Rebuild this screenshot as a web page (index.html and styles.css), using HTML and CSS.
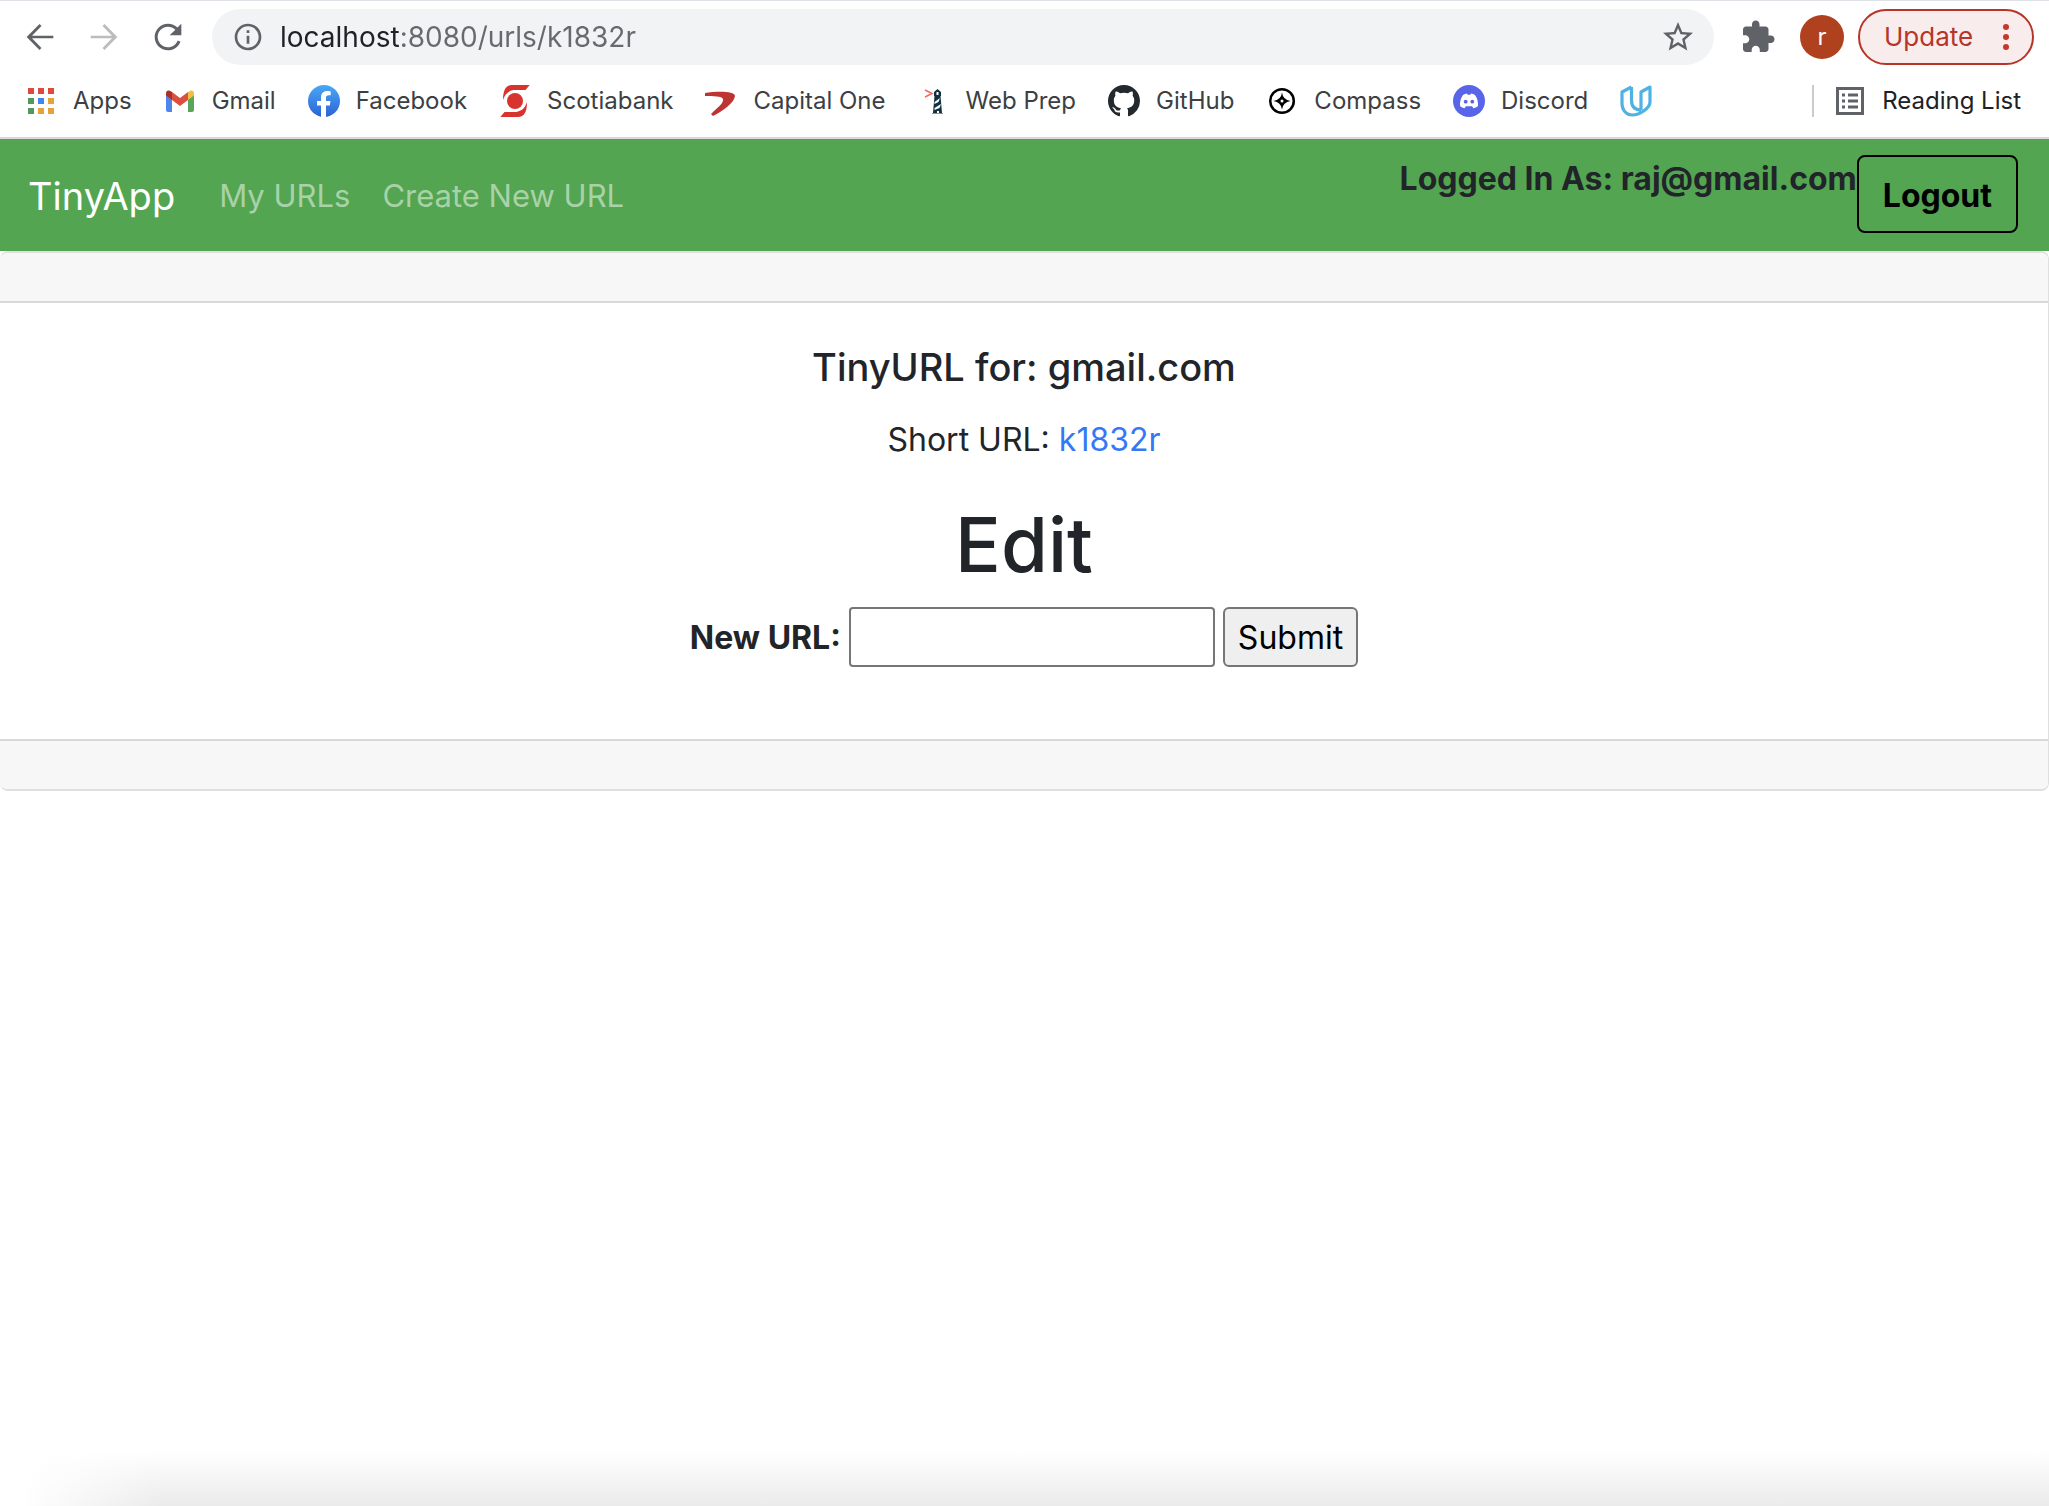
FILE: index.html
```html
<!DOCTYPE html>
<html lang="en">
<head>
<meta charset="utf-8">
<title>TinyApp</title>
<link rel="stylesheet" href="styles.css">
</head>
<body>
<header class="browser">
  <div class="toolbar">
    <div class="history">
      <button class="tool" type="button" aria-label="Back"><svg viewBox="0 0 24 24"><path d="M20 11.200H7.200l5.700-5.800-1.200-1.200L4 12l7.700 7.800 1.200-1.200-5.700-5.800H20z"/></svg></button>
      <button class="tool tool-off" type="button" aria-label="Forward"><svg viewBox="0 0 24 24"><path d="M4 11.200h12.800l-5.700-5.800 1.200-1.200L20 12l-7.700 7.800-1.200-1.200 5.700-5.800H4z"/></svg></button>
      <button class="tool" type="button" aria-label="Reload"><svg viewBox="0 0 24 24"><path d="M17.65 6.35C16.2 4.9 14.21 4 12 4c-4.42 0-7.99 3.58-7.99 8s3.57 8 7.99 8c3.4 0 6.3-2.1 7.500-5.200l-1.700-.7c-.9 2.400-3.200 4.100-5.800 4.100-3.400 0-6.200-2.800-6.200-6.200S8.600 5.800 12 5.800c1.700 0 3.200.7 4.400 1.900L13 11h7V4l-2.350 2.350z"/></svg></button>
    </div>
    <div class="address">
      <svg class="address-info" viewBox="0 0 24 24"><path d="M11 7h2v2h-2zm0 4h2v6h-2zm1-9C6.48 2 2 6.48 2 12s4.48 10 10 10 10-4.48 10-10S17.52 2 12 2zm0 18c-4.41 0-8-3.59-8-8s3.59-8 8-8 8 3.590 8 8-3.590 8-8 8z"/></svg>
      <input class="address-input" type="text" aria-label="Address" value="localhost:8080/urls/k1832r">
      <button class="star" type="button" aria-label="Bookmark this page"><svg viewBox="0 0 24 24"><path d="M22 9.240l-7.190-.62L12 2 9.190 8.630 2 9.240l5.460 4.730L5.820 21 12 17.270 18.180 21l-1.630-7.030L22 9.240zM12 15.400l-3.760 2.270 1-4.280-3.320-2.880 4.380-.38L12 6.100l1.710 4.040 4.380.38-3.320 2.880 1 4.280L12 15.400z"/></svg></button>
    </div>
    <button class="puzzle" type="button" aria-label="Extensions"><svg viewBox="0 0 24 24"><path d="M20.500 11H19V7c0-1.100-.9-2-2-2h-4V3.500C13 2.120 11.880 1 10.500 1S8 2.120 8 3.500V5H4c-1.100 0-1.990.9-1.990 2v3.800H3.500c1.490 0 2.700 1.210 2.700 2.700s-1.210 2.700-2.700 2.700H2V20c0 1.100.9 2 2 2h3.800v-1.500c0-1.490 1.210-2.700 2.700-2.700 1.490 0 2.700 1.210 2.700 2.700V22H17c1.100 0 2-.9 2-2v-4h1.500c1.380 0 2.500-1.120 2.500-2.500S21.880 11 20.500 11z"/></svg></button>
    <button class="avatar" type="button">r</button>
    <button class="update" type="button">Update
      <svg class="update-dots" viewBox="0 0 8 28"><circle cx="4" cy="4" r="3"/><circle cx="4" cy="14" r="3"/><circle cx="4" cy="24" r="3"/></svg>
    </button>
  </div>
  <nav class="bookmarks" aria-label="Bookmarks">
    <a class="bookmark" href="#"><svg viewBox="0 0 32 32"><path fill="#dd4b3e" d="M3 3h6v6H3zM13 3h6v6h-6zM23 3h6v6h-6z"/><path fill="#4f9a5b" d="M3 13h6v6H3zM3 23h6v6H3z"/><path fill="#4285f4" d="M13 13h6v6h-6z"/><path fill="#e5a33a" d="M23 13h6v6h-6zM13 23h6v6h-6zM23 23h6v6h-6z"/></svg>Apps</a>
    <a class="bookmark" href="#"><svg viewBox="0 0 32 32"><path fill="#4f86ec" d="M2 9v16q0 2 2 2h4V14z"/><path fill="#58a55c" d="M24 14v13h4q2 0 2-2V9z"/><path fill="#d95040" d="M8 7l8 6 8-6v8l-8 6-8-6z"/><path fill="#b02f25" d="M2 8.500C2 5 5 4.500 8 7v8l-6-4.500z"/><path fill="#f2bf42" d="M30 8.500C30 5 27 4.500 24 7v8l6-4.500z"/></svg>Gmail</a>
    <a class="bookmark" href="#"><svg viewBox="0 0 32 32"><defs><linearGradient id="fb" x2="0" y2="1"><stop stop-color="#4aa8f5"/><stop offset="1" stop-color="#2c62d6"/></linearGradient></defs><circle cx="16" cy="16" r="16" fill="url(#fb)"/><path fill="#fff" d="M13 32V20.500H9V16h4v-3.500c0-4.200 2.400-6.500 6.200-6.500 1.800 0 3.500.3 3.500.3v4h-2c-2 0-2.700 1.200-2.700 2.500V16h4.500l-.7 4.500H18V32z"/></svg>Facebook</a>
    <a class="bookmark" href="#"><svg viewBox="0 0 32 32"><g fill="#d9332e"><circle cx="16" cy="16" r="8"/><path d="M4 15C4 5 7 0 13 0h17.700l-4.200 5H15C9 6 6 9 4 15zM28 17c0 10-3 15-9 15H1.300l4.200-5H17c6-1 9-4 11-10z"/></g></svg>Scotiabank</a>
    <a class="bookmark" href="#"><svg viewBox="0 0 32 32"><path fill="#bd3430" d="M0 8C12 6 30 6 30 11c-1 7-12 15-22 20l-2-2c7-7 13-11 12-15-1-3-10-3-18-3z"/></svg>Capital One</a>
    <a class="bookmark" href="#"><svg viewBox="0 0 32 32"><path fill="none" stroke="#ef6b66" stroke-width="1.500" d="M7 5l7 3.500L7 12"/><path fill="#12303f" d="M16 7l3.500-3L23 7v4h-.5L24 28h-9l1.500-17H16z"/><path fill="#fff" d="M18.500 7h2v3h-2zM22 13l-5.500 4v2l4-2zM23 19l-6.500 4v2l5-2zM19 26h2v2h-2z"/><path fill="#ef6b66" d="M14 28h11v1H14z"/></svg>Web Prep</a>
    <a class="bookmark" href="#"><svg viewBox="0 0 16 16"><path fill="#24292e" d="M8 0C3.580 0 0 3.580 0 8c0 3.540 2.290 6.530 5.470 7.590.4.070.55-.17.55-.38 0-.19-.01-.82-.01-1.490-2.010.37-2.530-.49-2.690-.94-.09-.23-.48-.94-.82-1.130-.28-.15-.68-.52-.01-.53.630-.01 1.080.58 1.230.82.720 1.210 1.870.87 2.330.66.070-.52.280-.87.510-1.070-1.780-.2-3.640-.89-3.640-3.950 0-.87.310-1.590.820-2.150-.08-.2-.36-1.020.08-2.120 0 0 .67-.21 2.200.82.640-.18 1.320-.27 2-.27s1.360.09 2 .27c1.530-1.040 2.200-.82 2.200-.82.440 1.100.160 1.920.080 2.120.510.560.820 1.270.820 2.150 0 3.070-1.870 3.750-3.650 3.950.290.250.540.730.540 1.480 0 1.070-.01 1.930-.01 2.200 0 .210.150.460.550.380A8.010 8.010 0 0 0 16 8c0-4.420-3.580-8-8-8z"/></svg>GitHub</a>
    <a class="bookmark" href="#"><svg viewBox="0 0 32 32"><circle cx="16" cy="16" r="11.800" fill="none" stroke="#000" stroke-width="2.500"/><path d="M16 7.500q1 7.500 8.500 8.500-7.500 1-8.500 8.500-1-7.500-8.500-8.500 7.500-1 8.500-8.500z"/><circle cx="16" cy="16" r="1.500" fill="#fff"/></svg>Compass</a>
    <a class="bookmark" href="#"><svg viewBox="0 0 32 32"><circle cx="16" cy="16" r="16" fill="#5865e8"/><path fill="#fff" d="M10 10q2-1.200 4-1.500l.6 1.300h2.800l.6-1.300q2 .3 4 1.500 3.500 5 3 11-2 1.700-4.600 2.300l-1.300-2h-6.200l-1.300 2Q9 22.700 7 21q-.5-6 3-11z"/><circle cx="12.700" cy="16.700" r="1.900" fill="#5865e8"/><circle cx="19.300" cy="16.700" r="1.900" fill="#5865e8"/></svg>Discord</a>
    <a class="bookmark" href="#" aria-label="Udacity"><svg viewBox="0 0 32 32"><path fill="none" stroke="#4fb2e3" stroke-width="3.200" stroke-linejoin="round" d="M11.500 2L2 7v11c0 8 5 12 10 12 8 0 18-7 18-13V2l-9 5v18M11.500 2v13c0 6 3 10 9.500 10"/></svg></a>
    <button class="reading" type="button"><svg viewBox="0 0 28 28"><path fill="none" stroke="#5f6368" stroke-width="3" d="M1.500 1.500h25v25h-25z"/><path fill="#5f6368" d="M6 6.500h3v3H6zM12 6.500h10v3H12zM6 12.500h3v3H6zM12 12.500h10v3H12zM6 18.500h3v3H6zM12 18.500h10v3H12z"/></svg>Reading List</button>
  </nav>
</header>
<nav class="navbar" aria-label="Main">
  <div class="nav-links">
    <a class="brand" href="#">TinyApp</a>
    <a class="nav-link" href="#">My URLs</a>
    <a class="nav-link" href="#">Create New URL</a>
  </div>
  <form class="session">
    <span class="session-user">Logged In As: raj@gmail.com</span>
    <button class="logout" type="button">Logout</button>
  </form>
</nav>
<main class="card">
  <div class="card-bar card-header"></div>
  <div class="card-body">
    <h5 class="card-title">TinyURL for: gmail.com</h5>
    <p class="card-text">Short URL: <a class="short-link" href="#">k1832r</a></p>
    <h1 class="edit-title">Edit</h1>
    <form class="edit-form">
      <label class="edit-label" for="new-url">New URL:</label>
      <input class="edit-input" id="new-url" type="text">
      <button class="edit-submit" type="button">Submit</button>
    </form>
  </div>
  <div class="card-bar card-footer"></div>
</main>
<div class="page-shade"></div>
</body>
</html>
```
FILE: styles.css
```css
* { box-sizing: border-box; }

body {
  margin: 0;
  min-height: 100vh;
  display: flex;
  flex-direction: column;
  overflow-x: hidden;
  background: #fff;
  color: #212529;
  font-family: Inter, "Liberation Sans", sans-serif;
  font-size: 32px;
  line-height: 48px;
}

a { color: inherit; text-decoration: none; }
button, input { font: inherit; color: inherit; }
svg { display: block; flex: none; }

.browser {
  border-top: 1px solid #dee1e6;
  border-bottom: 2px solid #d9d9dc;
}

.toolbar {
  display: flex;
  align-items: center;
  padding: 8px 15px 8px 20px;
}

.history { display: flex; gap: 24px; margin-right: 24px; }

.tool, .star, .puzzle {
  flex: none;
  padding: 0;
  border: 0;
  background: none;
  fill: #5f6368;
}
.tool svg { width: 40px; height: 40px; }
.tool-off { fill: #babcbe; }

.address {
  flex: 1;
  display: flex;
  align-items: center;
  height: 56px;
  padding: 0 18px 0 20px;
  border-radius: 28px;
  background: #f1f3f4;
}
.address-info { width: 32px; height: 32px; margin-right: 16px; fill: #5f6368; }

/* The host is drawn darker than the port and path that follow it. */
.address-input {
  flex: 1;
  min-width: 0;
  padding: 0;
  border: 0;
  outline: 0;
  color: #66696d;
  font-size: 28px;
  line-height: 40px;
  background: linear-gradient(90deg, #202124 120px, #66696d 120px);
  background-clip: text;
  -webkit-background-clip: text;
  -webkit-text-fill-color: transparent;
}
.star svg, .puzzle svg { width: 36px; height: 36px; }
.puzzle { margin: 0 24px 0 26px; }

.avatar {
  width: 44px;
  height: 44px;
  margin-right: 14px;
  padding: 0;
  border: 0;
  border-radius: 50%;
  background: #b0411e;
  color: #fff;
  font-size: 24px;
  line-height: 40px;
}

.update {
  display: flex;
  align-items: center;
  justify-content: space-between;
  width: 176px;
  height: 56px;
  padding: 0 22px 0 24px;
  border: 2px solid #b63528;
  border-radius: 28px;
  background: #f9ecec;
  color: #b63528;
  font-size: 26px;
  line-height: 40px;
}
.update-dots { width: 8px; height: 28px; fill: #c53929; }

.bookmarks {
  display: flex;
  align-items: center;
  padding: 12px 28px 20px 25px;
  gap: 32px;
  color: #3c4043;
  font-size: 24px;
  line-height: 32px;
}
.bookmark { display: flex; align-items: center; gap: 16px; }
.bookmark svg { width: 32px; height: 32px; }

.reading {
  display: flex;
  align-items: center;
  gap: 18px;
  margin-left: auto;
  padding: 0 0 0 22px;
  border: 0;
  border-left: 2px solid #ccc;
  background: none;
  color: #202124;
}
.reading svg { width: 28px; height: 28px; }

.navbar {
  display: flex;
  align-items: flex-start;
  justify-content: space-between;
  padding: 16px 31px 14px 28px;
  background: #53a551;
}
.nav-links { display: flex; align-items: center; gap: 32px; line-height: 82px; }
.brand { margin-right: 12px; color: #fff; font-size: 38px; }
.nav-link { color: #a9d2a8; font-size: 31px; }

.session { display: flex; align-items: flex-start; font-weight: 700; }
.logout {
  height: 78px;
  padding: 4px 24px 0;
  border: 2px solid #000;
  border-radius: 8px;
  background: none;
  color: #000;
}

.card {
  border: solid #dfdfdf;
  border-width: 2px 1px 2px 0;
  border-radius: 8px;
  overflow: hidden;
}
.card-bar { height: 50px; background: #f7f7f7; }
.card-header { border-bottom: 2px solid #d9d9d9; }
.card-footer { border-top: 2px solid #d9d9d9; }

.card-body {
  display: flex;
  flex-direction: column;
  align-items: center;
  padding: 40px;
}
.card-title { margin: 0 0 25px; font-size: 38px; font-weight: 500; line-height: 48px; }
.card-text { margin: 0 0 32px; }
.short-link { color: #3478f6; }
.edit-title { margin: 0 0 15px; font-size: 76px; font-weight: 500; line-height: 96px; }

.edit-form { display: flex; align-items: center; gap: 8px; margin-bottom: 32px; }
.edit-label { padding-top: 2px; font-weight: 700; }
.edit-input {
  width: 366px;
  height: 60px;
  border: 2px solid #767676;
  border-radius: 4px;
  background: #fff;
}
.edit-submit {
  height: 60px;
  padding: 2px 13px 0;
  border: 2px solid #767676;
  border-radius: 6px;
  background: #efefef;
  color: #000;
}

.page-shade {
  height: 56px;
  margin-top: auto;
  background: linear-gradient(#fff0, #ebebeb);
  mask-image: linear-gradient(90deg, transparent 20px, #000 160px);
}
```
